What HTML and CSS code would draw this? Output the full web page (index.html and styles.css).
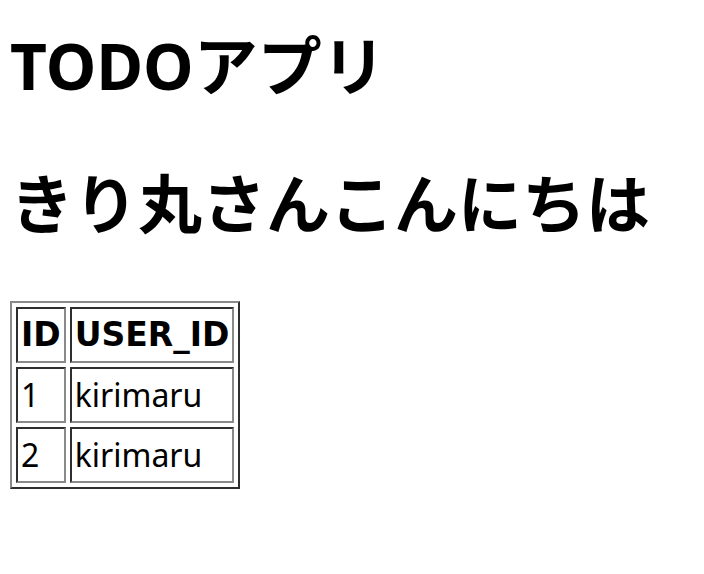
FILE: index.html
```html
<!DOCTYPE html>
<html lang="ja">
<head>
<meta charset="utf-8">
<title>TODOアプリ</title>
<link rel="stylesheet" href="styles.css">
</head>
<body>
<h1 class="title">TODOアプリ</h1>
<h2 class="greeting">きり丸さんこんにちは</h2>
<table class="todo-table">
  <thead>
    <tr><th>ID</th><th>USER_ID</th></tr>
  </thead>
  <tbody>
    <tr><td>1</td><td>kirimaru</td></tr>
    <tr><td>2</td><td>kirimaru</td></tr>
  </tbody>
</table>
</body>
</html>
```
FILE: styles.css
```css
html, body {
  background: #fff;
}
body {
  margin: 10px;
  color: #000;
  font-family: "Noto Sans", "Noto Sans CJK JP", sans-serif;
}
.title {
  margin: 16px 0 0;
  font-size: 64px;
  line-height: 80px;
  font-weight: bold;
}
.greeting {
  margin: 58px 0 57px;
  font-size: 64px;
  line-height: 80px;
  font-weight: bold;
}
.todo-table {
  border-collapse: separate;
  border-spacing: 4px;
  border: 2px solid;
  border-color: #8a8a8a #2e2e2e #2e2e2e #8a8a8a;
}
.todo-table th,
.todo-table td {
  border: 2px solid;
  border-color: #2e2e2e #8a8a8a #8a8a8a #2e2e2e;
  padding: 2px 3px;
  line-height: 48px;
  text-align: left;
}
.todo-table th {
  font-family: "DejaVu Sans", sans-serif;
  font-weight: bold;
  font-size: 33px;
  text-align: center;
}
.todo-table td {
  font-family: "Noto Sans", sans-serif;
  font-size: 32px;
}
```
